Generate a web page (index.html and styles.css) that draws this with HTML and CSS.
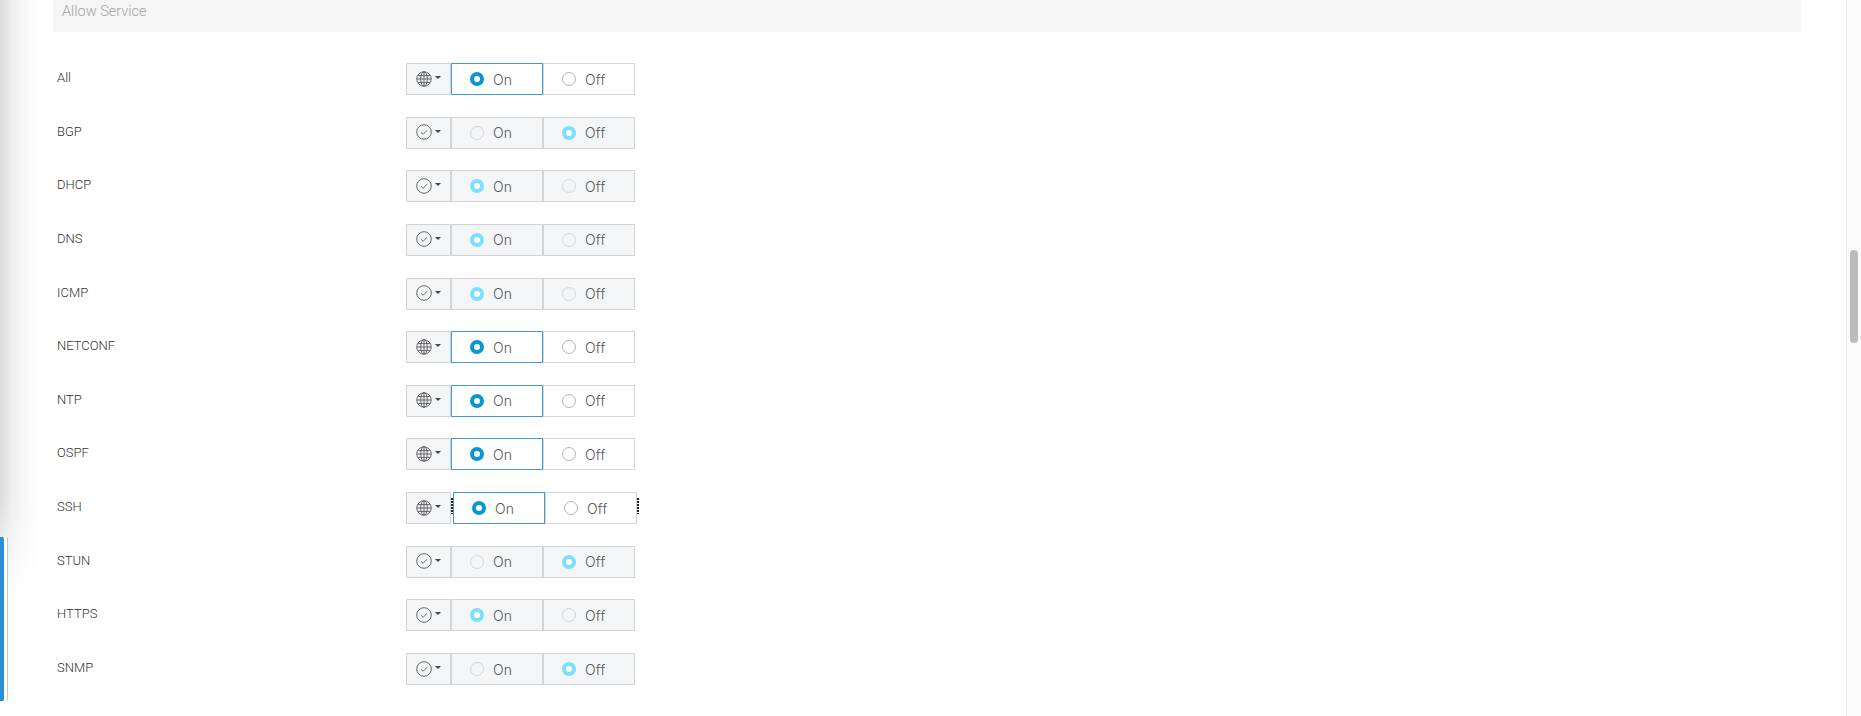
FILE: index.html
```html
<!DOCTYPE html>
<html lang="en">
<head>
<meta charset="utf-8">
<title>Allow Service</title>
<link rel="stylesheet" href="styles.css">
</head>
<body>
<svg class="defs" width="0" height="0" aria-hidden="true">
  <symbol id="globe" viewBox="0 0 16 16"><g fill="none" stroke="#58585b" stroke-width=".9"><circle cx="8" cy="8" r="7.2"/><ellipse cx="8" cy="8" rx="3.3" ry="7.2"/><path d="M8 .8v14.4M.8 8h14.4M1.8 4.6h12.4M1.8 11.4h12.4"/></g></symbol>
  <symbol id="check" viewBox="0 0 16 16"><g fill="none" stroke="#58585b" stroke-width=".9"><circle cx="8" cy="8" r="7.3"/><path d="M4.9 8.2l2.2 2.1 4-4"/></g></symbol>
</svg>
<div class="shadow"></div>
<div class="nav-marker"></div>
<main class="content">
  <h2 class="section-title">Allow Service</h2>
  <div class="rows">
    <div class="row"><span class="label">All</span><button class="scope"><svg class="scope-icon"><use href="#globe"/></svg><i class="caret"></i></button><div class="seg active"><span class="radio checked"></span>On</div><div class="seg"><span class="radio"></span>Off</div></div>
    <div class="row"><span class="label">BGP</span><button class="scope"><svg class="scope-icon"><use href="#check"/></svg><i class="caret"></i></button><div class="seg disabled"><span class="radio"></span>On</div><div class="seg disabled"><span class="radio checked"></span>Off</div></div>
    <div class="row"><span class="label">DHCP</span><button class="scope"><svg class="scope-icon"><use href="#check"/></svg><i class="caret"></i></button><div class="seg disabled"><span class="radio checked"></span>On</div><div class="seg disabled"><span class="radio"></span>Off</div></div>
    <div class="row"><span class="label">DNS</span><button class="scope"><svg class="scope-icon"><use href="#check"/></svg><i class="caret"></i></button><div class="seg disabled"><span class="radio checked"></span>On</div><div class="seg disabled"><span class="radio"></span>Off</div></div>
    <div class="row"><span class="label">ICMP</span><button class="scope"><svg class="scope-icon"><use href="#check"/></svg><i class="caret"></i></button><div class="seg disabled"><span class="radio checked"></span>On</div><div class="seg disabled"><span class="radio"></span>Off</div></div>
    <div class="row"><span class="label">NETCONF</span><button class="scope"><svg class="scope-icon"><use href="#globe"/></svg><i class="caret"></i></button><div class="seg active"><span class="radio checked"></span>On</div><div class="seg"><span class="radio"></span>Off</div></div>
    <div class="row"><span class="label">NTP</span><button class="scope"><svg class="scope-icon"><use href="#globe"/></svg><i class="caret"></i></button><div class="seg active"><span class="radio checked"></span>On</div><div class="seg"><span class="radio"></span>Off</div></div>
    <div class="row"><span class="label">OSPF</span><button class="scope"><svg class="scope-icon"><use href="#globe"/></svg><i class="caret"></i></button><div class="seg active"><span class="radio checked"></span>On</div><div class="seg"><span class="radio"></span>Off</div></div>
    <div class="row focused"><span class="label">SSH</span><button class="scope"><svg class="scope-icon"><use href="#globe"/></svg><i class="caret"></i></button><i class="tick"></i><div class="seg active"><span class="radio checked"></span>On</div><div class="seg"><span class="radio"></span>Off</div><i class="tick"></i></div>
    <div class="row"><span class="label">STUN</span><button class="scope"><svg class="scope-icon"><use href="#check"/></svg><i class="caret"></i></button><div class="seg disabled"><span class="radio"></span>On</div><div class="seg disabled"><span class="radio checked"></span>Off</div></div>
    <div class="row"><span class="label">HTTPS</span><button class="scope"><svg class="scope-icon"><use href="#check"/></svg><i class="caret"></i></button><div class="seg disabled"><span class="radio checked"></span>On</div><div class="seg disabled"><span class="radio"></span>Off</div></div>
    <div class="row"><span class="label">SNMP</span><button class="scope"><svg class="scope-icon"><use href="#check"/></svg><i class="caret"></i></button><div class="seg disabled"><span class="radio"></span>On</div><div class="seg disabled"><span class="radio checked"></span>Off</div></div>
  </div>
</main>
<div class="scrolltrack"><div class="scrollthumb"></div></div>
</body>
</html>
```
FILE: styles.css
```css
html, body { margin: 0; height: 716px; overflow: hidden; background: #fff; }
body { font-family: Inter, "Open Sans", "Liberation Sans", sans-serif; color: #58585b; position: relative; }
.defs { position: absolute; }
.shadow { position: absolute; left: 0; top: 0; width: 40px; height: 600px; background: linear-gradient(to right, #dcdcdc 0, #eeeeee 12px, #fafafa 28px, #ffffff 40px); -webkit-mask-image: linear-gradient(to bottom, #000 500px, transparent 600px); mask-image: linear-gradient(to bottom, #000 500px, transparent 600px); }
.nav-marker { position: absolute; left: 0; top: 537px; width: 4px; height: 164px; background: #2b8fd6; border-radius: 0 2px 2px 0; border-right: 1px solid #fff; box-shadow: 2px 0 0 #fff, 3px 0 0 #c8c8c8; }
.content { position: relative; padding-left: 53px; width: 1748px; }
.section-title { margin: 0; height: 32px; background: #f5f5f5; padding: 0 0 0 9px; font-family: Roboto, sans-serif; font-size: 14.5px; font-weight: 300; line-height: 24px; color: #a3a3a3; }
.rows { display: flex; flex-direction: column; gap: 21.65px; padding-top: 31px; }
.row { display: flex; height: 32px; align-items: stretch; }
.label { box-sizing: border-box; width: 353px; padding-left: 4px; font-family: Roboto, sans-serif; font-size: 13px; font-weight: 300; line-height: 29px; color: #333; }
.scope { box-sizing: border-box; width: 45px; padding: 0 0 0 9px; margin: 0; display: flex; align-items: center; gap: 3px; background: #f4f5f7; border: 1px solid #d2d2d2; border-radius: 1px; }
.scope-icon { width: 16px; height: 16px; margin-top: -1px; }
.caret { width: 0; height: 0; border: 3.5px solid transparent; border-top: 3.5px solid #444; border-bottom: 0; margin-top: -3px; }
.seg { box-sizing: border-box; width: 92px; display: flex; align-items: center; padding-left: 18px; gap: 9px; font-size: 14px; font-weight: 300; letter-spacing: .2px; color: #58585b; background: #fff; border: 1px solid #d6d6d6; position: relative; }
.seg.active { border-color: #3f9bd9; }
.seg.disabled { background: #f4f5f7; border-color: #d4d4d4; }
.radio { box-sizing: border-box; width: 14px; height: 14px; border-radius: 50%; border: 1px solid #b4b4b4; background: #fff; }
.radio.checked { border: 4px solid #0a96d2; }
.disabled .radio { border-color: #d8d8d8; background: #f4f5f7; }
.disabled .radio.checked { border: 4px solid #7be0ff; background: #fff; }
.tick { width: 2px; margin: 6px 0 0; height: 16px; background: repeating-linear-gradient(to bottom, #222 0, #222 2px, transparent 2px, transparent 3px); }
.scrolltrack { position: absolute; right: 0; top: 0; width: 14px; height: 716px; background: #fafafa; border-left: 1px solid #e6e6e6; }
.scrollthumb { position: absolute; left: 3px; top: 250px; width: 8px; height: 93px; border-radius: 4px; background: #bcbcbc; }
```
